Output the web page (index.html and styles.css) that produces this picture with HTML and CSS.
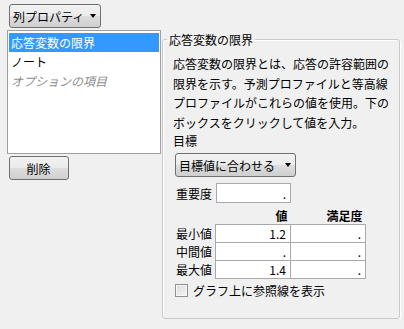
FILE: index.html
```html
<!DOCTYPE html>
<html lang="ja">
<head>
  <meta charset="UTF-8">
  <title>列プロパティ</title>
  <link rel="stylesheet" href="styles.css">
</head>
<body>
  <div class="window">
    <div class="left">
      <button class="btn menu-btn">列プロパティ<span class="caret"></span></button>
      <ul class="prop-list">
        <li class="selected">応答変数の限界</li>
        <li>ノート</li>
        <li class="optional">オプションの項目</li>
      </ul>
      <button class="btn delete-btn">削除</button>
    </div>

    <fieldset class="group">
      <legend>応答変数の限界</legend>
      <p class="desc">応答変数の限界とは、応答の許容範囲の<br>限界を示す。予測プロファイルと等高線<br>プロファイルがこれらの値を使用。下の<br>ボックスをクリックして値を入力。</p>
      <div class="goal-label">目標</div>
      <div class="controls">
        <button class="btn goal-btn">目標値に合わせる<span class="caret"></span></button>
        <div class="importance">
          <label>重要度</label>
          <input type="text" value=".">
        </div>
        <table class="limits">
          <thead>
            <tr><th></th><th>値</th><th>満足度</th></tr>
          </thead>
          <tbody>
            <tr><th>最小値</th><td>1.2</td><td>.</td></tr>
            <tr><th>中間値</th><td>.</td><td>.</td></tr>
            <tr><th>最大値</th><td>1.4</td><td>.</td></tr>
          </tbody>
        </table>
        <label class="check"><span class="box"></span>グラフ上に参照線を表示</label>
      </div>
    </fieldset>
  </div>
</body>
</html>
```

FILE: styles.css
```css
body {
  margin: 0;
  background: #f0f0f0;
  color: #000;
  font-family: "Noto Sans CJK JP", "Noto Sans", sans-serif;
  font-size: 12px;
}

.window {
  display: flex;
  align-items: flex-start;
  padding: 4px 4px 0 7px;
}

.left {
  width: 154px;
  display: flex;
  flex-direction: column;
  align-items: flex-start;
}

.btn {
  font-family: inherit;
  font-size: 12px;
  color: #000;
  height: 24px;
  padding: 0 4px 0 3px;
  border: 1px solid #707070;
  border-radius: 3px;
  background: linear-gradient(#f2f2f2 0%, #ebebeb 48%, #dddddd 52%, #cfcfcf 100%);
  display: flex;
  align-items: center;
  justify-content: space-between;
  white-space: nowrap;
}

.caret {
  flex: none;
  width: 0;
  height: 0;
  border-left: 3.5px solid transparent;
  border-right: 3.5px solid transparent;
  border-top: 4px solid #000;
}

.menu-btn {
  margin-left: 2px;
  width: 92px;
}

.prop-list {
  list-style: none;
  margin: 2px 0 0;
  padding: 2px 1px;
  width: 154px;
  height: 124px;
  box-sizing: border-box;
  background: #fff;
  border: 1px solid #a0a0a0;
}

.prop-list li {
  height: 19px;
  line-height: 19px;
  padding-left: 2px;
}

.prop-list .selected {
  background: #3399ff;
  color: #fff;
}

.prop-list .optional {
  color: #8c8c8c;
  font-style: italic;
}

.delete-btn {
  margin: 2px 0 0 2px;
  width: 60px;
  justify-content: center;
}

.group {
  margin: 27px 0 0 1px;
  width: 238px;
  height: 288px;
  box-sizing: border-box;
  padding: 0 8px 0 10px;
  border: 1px solid #c9c9c9;
  border-radius: 3px;
  box-shadow: 1px 1px 0 #fff, inset 1px 1px 0 #fff;
}

.group legend {
  margin-left: -6px;
  padding: 0 2px;
  line-height: 17px;
}

.desc {
  margin: 6px 0 0;
  line-height: 19.5px;
  white-space: nowrap;
}

.goal-label {
  line-height: 17px;
}

.controls {
  margin-left: 2px;
}

.goal-btn {
  margin-top: 4px;
  width: 121px;
}

.importance {
  display: flex;
  align-items: center;
  margin-top: 6px;
}

.importance label {
  width: 40px;
  padding-left: 1px;
}

.importance input {
  width: 75px;
  height: 20px;
  box-sizing: border-box;
  border: 1px solid #a9a9a9;
  font-family: inherit;
  font-size: 12px;
  text-align: right;
  padding: 0 4px;
  margin: 0;
}

.limits {
  border-collapse: collapse;
  margin-top: 5px;
}

.limits thead th {
  font-weight: bold;
  text-align: right;
  height: 16px;
  line-height: 16px;
  padding: 0 3px 0 0;
}

.limits tbody th {
  font-weight: normal;
  text-align: left;
  width: 39px;
  padding: 0 0 0 1px;
}

.limits td {
  background: #fff;
  border: 1px solid #a9a9a9;
  height: 17px;
  line-height: 17px;
  width: 66px;
  padding: 0 4px;
  text-align: right;
}

.check {
  display: flex;
  align-items: center;
  margin-top: 3px;
}

.check .box {
  width: 11px;
  height: 11px;
  border: 1px solid #8e8f8f;
  background: linear-gradient(135deg, #dcdcdc, #f4f4f4);
  box-shadow: inset 0 0 0 1px #f7f7f7;
  margin-right: 5px;
}
```
